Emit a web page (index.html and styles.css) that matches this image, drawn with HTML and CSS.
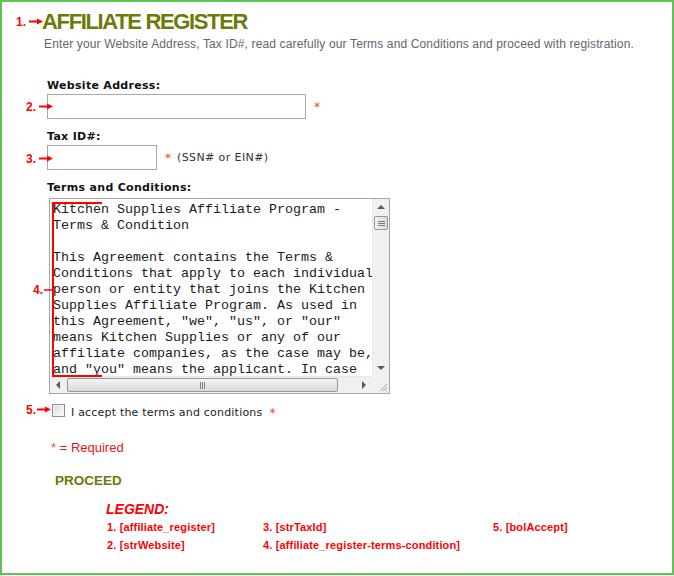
FILE: index.html
```
<!DOCTYPE html>
<html lang="en">
<head>
  <meta charset="UTF-8">
  <title>Affiliate Register</title>
  <link rel="stylesheet" href="styles.css">
</head>
<body>

<div class="page">
  <h1 class="title">AFFILIATE REGISTER</h1>
  <p class="intro">Enter your Website Address, Tax ID#, read carefully our Terms and Conditions and proceed with registration.</p>

  <form class="reg">
    <div class="field">
      <label class="lbl">Website Address:</label>
      <div class="row">
        <input type="text" class="inp inp-site">
        <span class="req">*</span>
      </div>
    </div>

    <div class="field">
      <label class="lbl">Tax ID#:</label>
      <div class="row">
        <input type="text" class="inp inp-tax">
        <span class="req">*</span>
        <span class="hint">(SSN# or EIN#)</span>
      </div>
    </div>

    <div class="field">
      <label class="lbl">Terms and Conditions:</label>
      <div class="terms">
        <div class="terms-text">Kitchen Supplies Affiliate Program -
Terms &amp; Condition

This Agreement contains the Terms &amp;
Conditions that apply to each individual
person or entity that joins the Kitchen
Supplies Affiliate Program. As used in
this Agreement, "we", "us", or "our"
means Kitchen Supplies or any of our
affiliate companies, as the case may be,
and "you" means the applicant. In case</div>
        <div class="vbar">
          <span class="sb-btn"><i class="tri tri-up"></i></span>
          <span class="thumb thumb-v"><i></i><i></i><i></i></span>
          <span class="sb-track"></span>
          <span class="sb-btn"><i class="tri tri-down"></i></span>
        </div>
        <div class="hbar">
          <span class="sb-btn"><i class="tri tri-left"></i></span>
          <span class="thumb thumb-h"><i></i><i></i><i></i></span>
          <span class="sb-track"></span>
          <span class="sb-btn"><i class="tri tri-right"></i></span>
        </div>
        <div class="corner">
          <svg width="17" height="17" viewBox="0 0 17 17">
            <path d="M15 8 L8 15 M15 11 L11 15 M15 14 L14 15" stroke="#a0a0a0" stroke-width="1"/>
          </svg>
        </div>
      </div>
    </div>

    <div class="accept">
      <span class="check"></span>
      <span class="accept-text">I accept the terms and conditions</span>
      <span class="req">*</span>
    </div>

    <p class="required"><span class="req-star">*</span> = Required</p>

    <div class="proceed">PROCEED</div>
  </form>

  <div class="legend">
    <div class="legend-title">LEGEND:</div>
    <div class="legend-grid">
      <span>1. [affiliate_register]</span>
      <span>3. [strTaxId]</span>
      <span>5. [bolAccept]</span>
      <span>2. [strWebsite]</span>
      <span>4. [affiliate_register-terms-condition]</span>
    </div>
  </div>

  <!-- red annotation marks laid over the form -->
  <span class="mark mark-1">1.<svg class="arrow" width="14" height="11" viewBox="0 0 14 11"><path d="M0 4.5 H9" stroke="#f00" stroke-width="2"/><polygon points="8,1.5 14,4.5 8,7.5" fill="#f00"/></svg></span>
  <span class="mark mark-2">2.<svg class="arrow" width="14" height="11" viewBox="0 0 14 11"><path d="M0 4.5 H9" stroke="#f00" stroke-width="2"/><polygon points="8,1.5 14,4.5 8,7.5" fill="#f00"/></svg></span>
  <span class="mark mark-3">3.<svg class="arrow" width="14" height="11" viewBox="0 0 14 11"><path d="M0 4.5 H9" stroke="#f00" stroke-width="2"/><polygon points="8,1.5 14,4.5 8,7.5" fill="#f00"/></svg></span>
  <span class="mark mark-4">4.<svg class="dash" width="8" height="11" viewBox="0 0 8 11"><path d="M0 5 H8" stroke="#f00" stroke-width="1.5"/></svg></span>
  <span class="mark mark-5">5.<svg class="arrow" width="14" height="11" viewBox="0 0 14 11"><path d="M0 4.5 H9" stroke="#f00" stroke-width="2"/><polygon points="8,1.5 14,4.5 8,7.5" fill="#f00"/></svg></span>
  <span class="bracket"></span>
</div>

</body>
</html>
```

FILE: styles.css
```
* {
  margin: 0;
  padding: 0;
  box-sizing: border-box;
}

body {
  background: #fff;
  font-family: 'Liberation Sans', Arial, sans-serif;
}

.page {
  position: relative;
  width: 674px;
  height: 575px;
  border: 2px solid #62c057;
  padding-top: 7px;
}

.title {
  margin-left: 40px;
  font-size: 22px;
  line-height: 25px;
  font-weight: bold;
  letter-spacing: -1.35px;
  color: #6b7b05;
}

.intro {
  margin: 3px 0 0 42px;
  font-size: 12px;
  line-height: 15px;
  letter-spacing: 0.14px;
  color: #646470;
}

.reg {
  margin: 27px 0 0 45px;
  font-family: 'DejaVu Sans', Verdana, sans-serif;
}

.field {
  margin-bottom: 11px;
}

.lbl {
  display: block;
  font-size: 11px;
  line-height: 14px;
  font-weight: bold;
  letter-spacing: 0.3px;
  color: #111;
  margin-bottom: 1px;
}

.row {
  display: flex;
  align-items: center;
}

.inp {
  height: 25px;
  border: 1px solid #a9a9a9;
  background: #fff;
  outline: none;
}

.inp-site {
  width: 259px;
}

.inp-tax {
  width: 110px;
}

.req {
  color: #f4472a;
  font-size: 12px;
  line-height: 14px;
  margin-left: 8px;
}

.hint {
  margin-left: 6px;
  font-size: 11px;
  letter-spacing: 0.4px;
  color: #333;
}

/* fake textarea with classic scrollbars */
.terms {
  margin: 3px 0 0 2px;
  width: 341px;
  height: 196px;
  border: 1px solid #a5a5a5;
  display: grid;
  grid-template-columns: 1fr 17px;
  grid-template-rows: 1fr 17px;
}

.terms-text {
  overflow: hidden;
  padding: 3px 0 0 3px;
  font-family: 'Liberation Mono', 'Courier New', monospace;
  font-size: 13.33px;
  line-height: 16px;
  white-space: pre;
  color: #1a1a1a;
}

.vbar, .hbar {
  display: flex;
  background: #f0f0f0;
}

.vbar {
  flex-direction: column;
  border-left: 1px solid #e8e8e8;
}

.hbar {
  border-top: 1px solid #e8e8e8;
}

.sb-btn {
  flex: 0 0 16px;
  display: flex;
  align-items: center;
  justify-content: center;
}

.sb-track {
  flex: 1;
}

.tri {
  width: 0;
  height: 0;
  border: 4px solid transparent;
}

.tri-up {
  border-bottom-color: #5a5a5a;
  border-top-width: 0;
}

.tri-down {
  border-top-color: #5a5a5a;
  border-bottom-width: 0;
}

.tri-left {
  border-right-color: #5a5a5a;
  border-left-width: 0;
}

.tri-right {
  border-left-color: #5a5a5a;
  border-right-width: 0;
}

.thumb {
  display: flex;
  align-items: center;
  justify-content: center;
  gap: 1px;
  border: 1px solid #979797;
  border-radius: 2px;
}

.thumb i {
  background: #7c7c7c;
}

.thumb-v {
  flex: 0 0 14px;
  margin: 1px 1px 0;
  flex-direction: column;
  background: linear-gradient(to right, #f4f4f4, #dadada);
}

.thumb-v i {
  width: 7px;
  height: 1px;
}

.thumb-h {
  flex: 0 0 271px;
  margin: 1px 0 1px 1px;
  background: linear-gradient(to bottom, #f4f4f4, #dadada);
}

.thumb-h i {
  width: 1px;
  height: 7px;
}

.corner {
  background: #f0f0f0;
}

.accept {
  display: flex;
  align-items: flex-start;
  margin-top: 12px;
  font-size: 11px;
  line-height: 14px;
  color: #222;
}

.check {
  width: 13px;
  height: 13px;
  margin: -2px 0 0 5px;
  border: 1px solid #8e8f8f;
  background: linear-gradient(135deg, #dcdcdc, #fbfbfb);
  box-shadow: inset 0 0 0 1px #f4f4f4;
}

.accept-text {
  margin-left: 6px;
  letter-spacing: 0.2px;
}

.accept .req {
  margin-left: 7px;
}

.required {
  margin: 20px 0 0 4px;
  font-family: 'Liberation Sans', Arial, sans-serif;
  font-size: 13px;
  line-height: 16px;
  color: #e8131b;
}

.req-star {
  color: #f4472a;
}

.proceed {
  margin: 17px 0 0 8px;
  font-family: 'Liberation Sans', Arial, sans-serif;
  font-size: 13.5px;
  line-height: 16px;
  font-weight: bold;
  color: #6b7b05;
}

.legend {
  margin: 12px 0 0 105px;
  color: #f00;
  font-weight: bold;
}

.legend-title {
  margin-left: -1px;
  font-size: 14px;
  line-height: 17px;
  font-style: italic;
}

.legend-grid {
  display: grid;
  grid-template-columns: 156px 230px auto;
  font-size: 11px;
  line-height: 18px;
  letter-spacing: 0.15px;
}

/* annotation marks */
.mark {
  position: absolute;
  display: flex;
  align-items: flex-start;
  gap: 3px;
  font-size: 12px;
  line-height: 11px;
  font-weight: bold;
  color: #f00;
}

.mark-1 { left: 14px; top: 15px; }
.mark-2 { left: 24px; top: 100px; }
.mark-3 { left: 24px; top: 152px; }
.mark-4 { left: 31px; top: 283px; gap: 1px; }
.mark-5 { left: 24px; top: 403px; gap: 1px; }

.bracket {
  position: absolute;
  left: 50px;
  top: 200px;
  width: 50px;
  height: 175px;
  border: 2px solid #f00;
  border-right: none;
}
```
